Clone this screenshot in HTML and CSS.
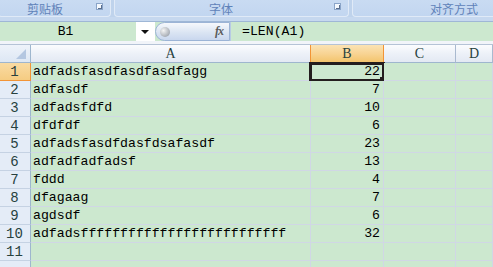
FILE: index.html
```html
<!DOCTYPE html>
<html lang="zh-CN">
<head>
    <meta charset="UTF-8">
    <title>Excel - LEN</title>
    <link rel="stylesheet" href="styles.css">
</head>
<body>
    <div class="ribbon">
        <div class="group group-clip">
            <span class="group-label">剪贴板</span>
            <span class="launcher"></span>
        </div>
        <div class="group group-font">
            <span class="group-label">字体</span>
            <span class="launcher"></span>
        </div>
        <div class="group group-align">
            <span class="group-label">对齐方式</span>
        </div>
    </div>
    <div class="ribbon-foot"></div>

    <div class="formula-bar">
        <div class="name-box">B1</div>
        <div class="name-drop"><span class="arrow"></span></div>
        <div class="fx-pill">
            <span class="knob"></span>
            <span class="fx">fx</span>
        </div>
        <div class="formula">=LEN(A1)</div>
    </div>
    <div class="bar-gap"></div>

    <div class="sheet">
        <div class="corner"><span class="tri"></span></div>
        <div class="col-head">A</div>
        <div class="col-head active">B</div>
        <div class="col-head">C</div>
        <div class="col-head">D</div>

        <div class="row-head active">1</div>
        <div class="cell">adfadsfasdfasdfasdfagg</div>
        <div class="cell num selected">22<span class="sel-box"><span class="handle"></span></span></div>
        <div class="cell"></div>
        <div class="cell"></div>

        <div class="row-head">2</div>
        <div class="cell">adfasdf</div>
        <div class="cell num">7</div>
        <div class="cell"></div>
        <div class="cell"></div>

        <div class="row-head">3</div>
        <div class="cell">adfadsfdfd</div>
        <div class="cell num">10</div>
        <div class="cell"></div>
        <div class="cell"></div>

        <div class="row-head">4</div>
        <div class="cell">dfdfdf</div>
        <div class="cell num">6</div>
        <div class="cell"></div>
        <div class="cell"></div>

        <div class="row-head">5</div>
        <div class="cell">adfadsfasdfdasfdsafasdf</div>
        <div class="cell num">23</div>
        <div class="cell"></div>
        <div class="cell"></div>

        <div class="row-head">6</div>
        <div class="cell">adfadfadfadsf</div>
        <div class="cell num">13</div>
        <div class="cell"></div>
        <div class="cell"></div>

        <div class="row-head">7</div>
        <div class="cell">fddd</div>
        <div class="cell num">4</div>
        <div class="cell"></div>
        <div class="cell"></div>

        <div class="row-head">8</div>
        <div class="cell">dfagaag</div>
        <div class="cell num">7</div>
        <div class="cell"></div>
        <div class="cell"></div>

        <div class="row-head">9</div>
        <div class="cell">agdsdf</div>
        <div class="cell num">6</div>
        <div class="cell"></div>
        <div class="cell"></div>

        <div class="row-head">10</div>
        <div class="cell">adfadsffffffffffffffffffffffffff</div>
        <div class="cell num">32</div>
        <div class="cell"></div>
        <div class="cell"></div>

        <div class="row-head">11</div>
        <div class="cell"></div>
        <div class="cell"></div>
        <div class="cell"></div>
        <div class="cell"></div>

        <div class="row-head"></div>
        <div class="cell"></div>
        <div class="cell"></div>
        <div class="cell"></div>
        <div class="cell"></div>
    </div>
</body>
</html>
```

FILE: styles.css
```css
body {
    margin: 0;
    width: 493px;
    height: 267px;
    overflow: hidden;
    background: #cce8cf;
    font-family: "Liberation Mono", "DejaVu Sans Mono", monospace;
}

/* ribbon group captions */
.ribbon {
    display: flex;
    gap: 3px;
    height: 17px;
    background: #bfd3ec;
}

.group {
    position: relative;
    display: flex;
    align-items: flex-start;
    box-sizing: border-box;
    height: 17px;
    background: linear-gradient(#c9dbf2, #c2d6f0);
    border: 1px solid #e0eaf7;
    border-top: none;
    border-radius: 0 0 4px 4px;
}

.group-clip {
    width: 113px;
    margin-left: -2px;
    padding-left: 28px;
}

.group-font {
    width: 235px;
    padding-left: 94px;
}

.group-align {
    flex: 1;
    margin-right: -4px;
    padding-left: 77px;
}

.group-label {
    margin-top: 1px;
    font-family: "Noto Sans CJK SC", sans-serif;
    font-size: 12px;
    color: #5f82b9;
    line-height: 16px;
    white-space: nowrap;
}

.launcher {
    position: absolute;
    right: 7px;
    top: 3px;
    width: 5px;
    height: 5px;
    border: 1px solid #8aa4c8;
    background: #f4f8fd;
}

.launcher::after {
    content: "";
    position: absolute;
    right: 0;
    bottom: 0;
    width: 3px;
    height: 3px;
    border-right: 1px solid #5a6f8e;
    border-bottom: 1px solid #5a6f8e;
}

.ribbon-foot {
    height: 4px;
    background: #c6d8ef;
    border-bottom: 1px solid #9fb7d6;
}

/* formula bar */
.formula-bar {
    display: flex;
    height: 19px;
    align-items: stretch;
    background: #cce8cf;
}

.name-box {
    width: 131px;
    padding-right: 5px;
    text-align: center;
    font-size: 13px;
    line-height: 19px;
    color: #000;
}

.name-drop {
    width: 19px;
    background: #fff;
    display: flex;
    align-items: center;
    justify-content: center;
}

.arrow {
    width: 0;
    height: 0;
    border-left: 4px solid transparent;
    border-right: 4px solid transparent;
    border-top: 4px solid #111;
    margin-left: -2px;
}

.fx-pill {
    width: 75px;
    box-sizing: border-box;
    border: 1px solid #9cb4d6;
    border-radius: 10px 0 0 10px;
    background: linear-gradient(#f6f8fc, #dbe5f3 55%, #c9d7ee);
    display: flex;
    align-items: center;
    justify-content: space-between;
    padding: 0 6px 0 4px;
}

.knob {
    width: 10px;
    height: 10px;
    border-radius: 50%;
    background: radial-gradient(circle at 35% 35%, #f4f4f4, #a9aeb6 70%, #8d939c);
}

.fx {
    font-family: "Liberation Serif", serif;
    font-style: italic;
    font-weight: bold;
    font-size: 12px;
    color: #5b5b5b;
    letter-spacing: -1px;
}

.formula {
    flex: 1;
    padding-left: 11px;
    font-size: 13.2px;
    line-height: 19px;
    color: #000;
    border-left: 1px solid #b8cbe4;
}

.bar-gap {
    height: 3px;
    background: #f1f4f9;
    border-bottom: 1px solid #b5c3d6;
}

/* worksheet */
.sheet {
    display: grid;
    grid-template-columns: 31px 280px 73px 72px 1fr;
    grid-auto-rows: 18px;
}

.corner {
    position: relative;
    box-sizing: border-box;
    background: linear-gradient(#eef3fa, #dde7f4);
    border-right: 1px solid #9eb6ce;
    border-bottom: 1px solid #9eb6ce;
}

.tri {
    position: absolute;
    right: 4px;
    bottom: 3px;
    width: 0;
    height: 0;
    border-left: 10px solid transparent;
    border-bottom: 10px solid #b4c7e1;
}

.col-head {
    box-sizing: border-box;
    background: linear-gradient(#fbfcfe, #edf1f8 50%, #e3e9f3);
    border-right: 1px solid #a9b9cf;
    border-bottom: 1px solid #9eb6ce;
    text-align: center;
    font-family: "Liberation Serif", serif;
    font-size: 14px;
    line-height: 18px;
    color: #27413e;
}

.col-head.active {
    background: linear-gradient(#fbe3b4, #f8d494 50%, #f3c46c);
    border-right-color: #f29436;
    border-left: 1px solid #f29436;
    margin-left: -1px;
    border-bottom-color: #f29436;
}

.row-head {
    box-sizing: border-box;
    background: #e4ecf7;
    border-right: 1px solid #9eb6ce;
    border-bottom: 1px solid #c5d2e3;
    text-align: center;
    font-size: 14px;
    line-height: 18px;
    color: #27413e;
    padding-right: 1px;
}

.row-head.active {
    background: linear-gradient(#f9dba3, #f5cc82);
    border-right-color: #f29436;
    border-bottom-color: #f29436;
}

.cell {
    position: relative;
    box-sizing: border-box;
    background: #cce8cf;
    border-right: 1px solid #d0d7e5;
    border-bottom: 1px solid #d0d7e5;
    font-size: 13.2px;
    line-height: 18px;
    padding-left: 2px;
    white-space: nowrap;
    color: #000;
}

.cell.num {
    text-align: right;
    padding-right: 3px;
}

.sel-box {
    position: absolute;
    top: -1px;
    left: -2px;
    right: -2px;
    bottom: -2px;
    border: 3px solid #231d1e;
}

.handle {
    position: absolute;
    right: -5px;
    bottom: -5px;
    width: 6px;
    height: 6px;
    background: #231d1e;
    border: 1px solid #fff;
    border-top: none;
    border-left: none;
}
```
